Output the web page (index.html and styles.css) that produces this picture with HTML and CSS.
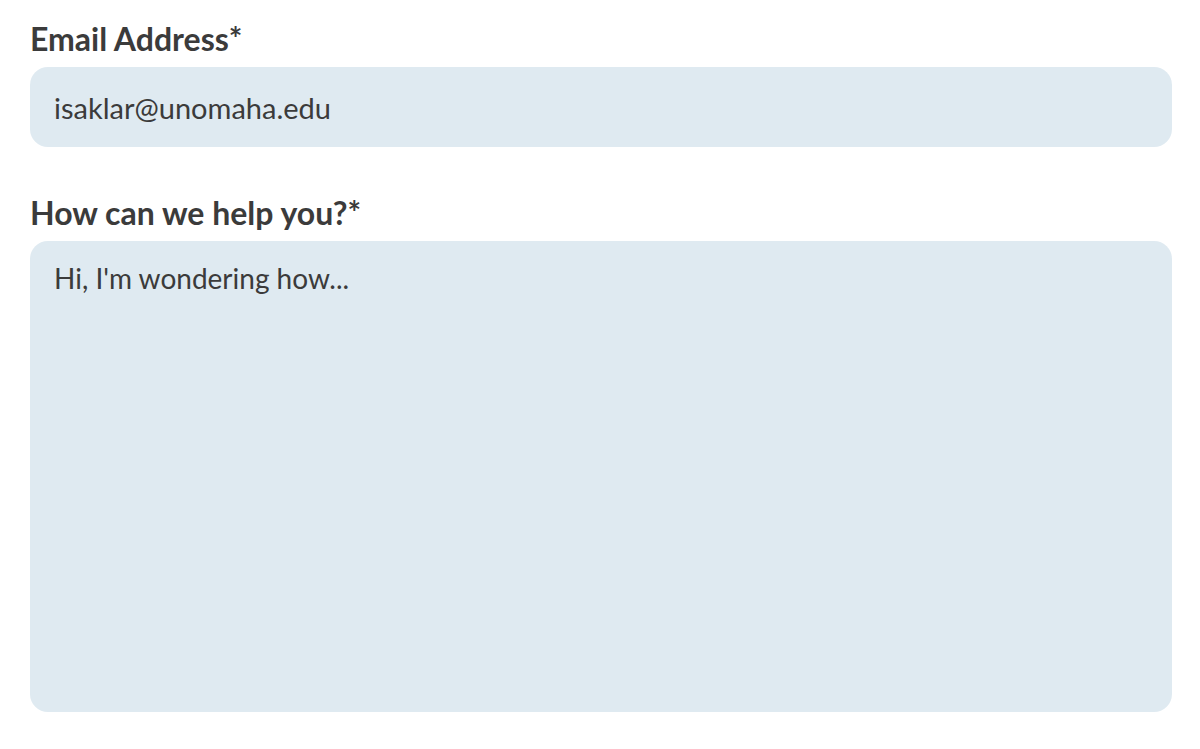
FILE: index.html
```html
<!DOCTYPE html>
<html>
<head>
<meta charset="utf-8">
<link rel="stylesheet" href="styles.css">
</head>
<body>
<form class="form">
  <div class="field">
    <label class="label" for="email">Email Address*</label>
    <input class="input" id="email" type="text" value="isaklar@unomaha.edu">
  </div>
  <div class="field">
    <label class="label" for="msg">How can we help you?*</label>
    <textarea class="input textarea" id="msg">Hi, I'm wondering how...</textarea>
  </div>
</form>
</body>
</html>
```

FILE: styles.css
```css
html, body {
  margin: 0;
  padding: 0;
  background: #ffffff;
}
body {
  font-family: Lato, "Liberation Sans", sans-serif;
  color: #3b3b3b;
}
.form {
  display: flex;
  flex-direction: column;
  gap: 47px;
  padding: 20px 28px 0 30px;
}
.field {
  display: flex;
  flex-direction: column;
  gap: 9px;
}
.label {
  font-weight: 700;
  font-size: 32px;
  line-height: 38px;
  color: #3b3b3b;
}
.input {
  box-sizing: border-box;
  width: 100%;
  height: 80px;
  border: none;
  outline: none;
  border-radius: 18px;
  background: #dfeaf1;
  padding: 0 24px;
  font-family: Lato, "Liberation Sans", sans-serif;
  font-size: 29px;
  color: #3b3b3b;
  margin: 0;
}
.textarea {
  height: 471px;
  padding: 20px 24px;
  font-size: 28px;
  resize: none;
  line-height: 34px;
  display: block;
}
```
